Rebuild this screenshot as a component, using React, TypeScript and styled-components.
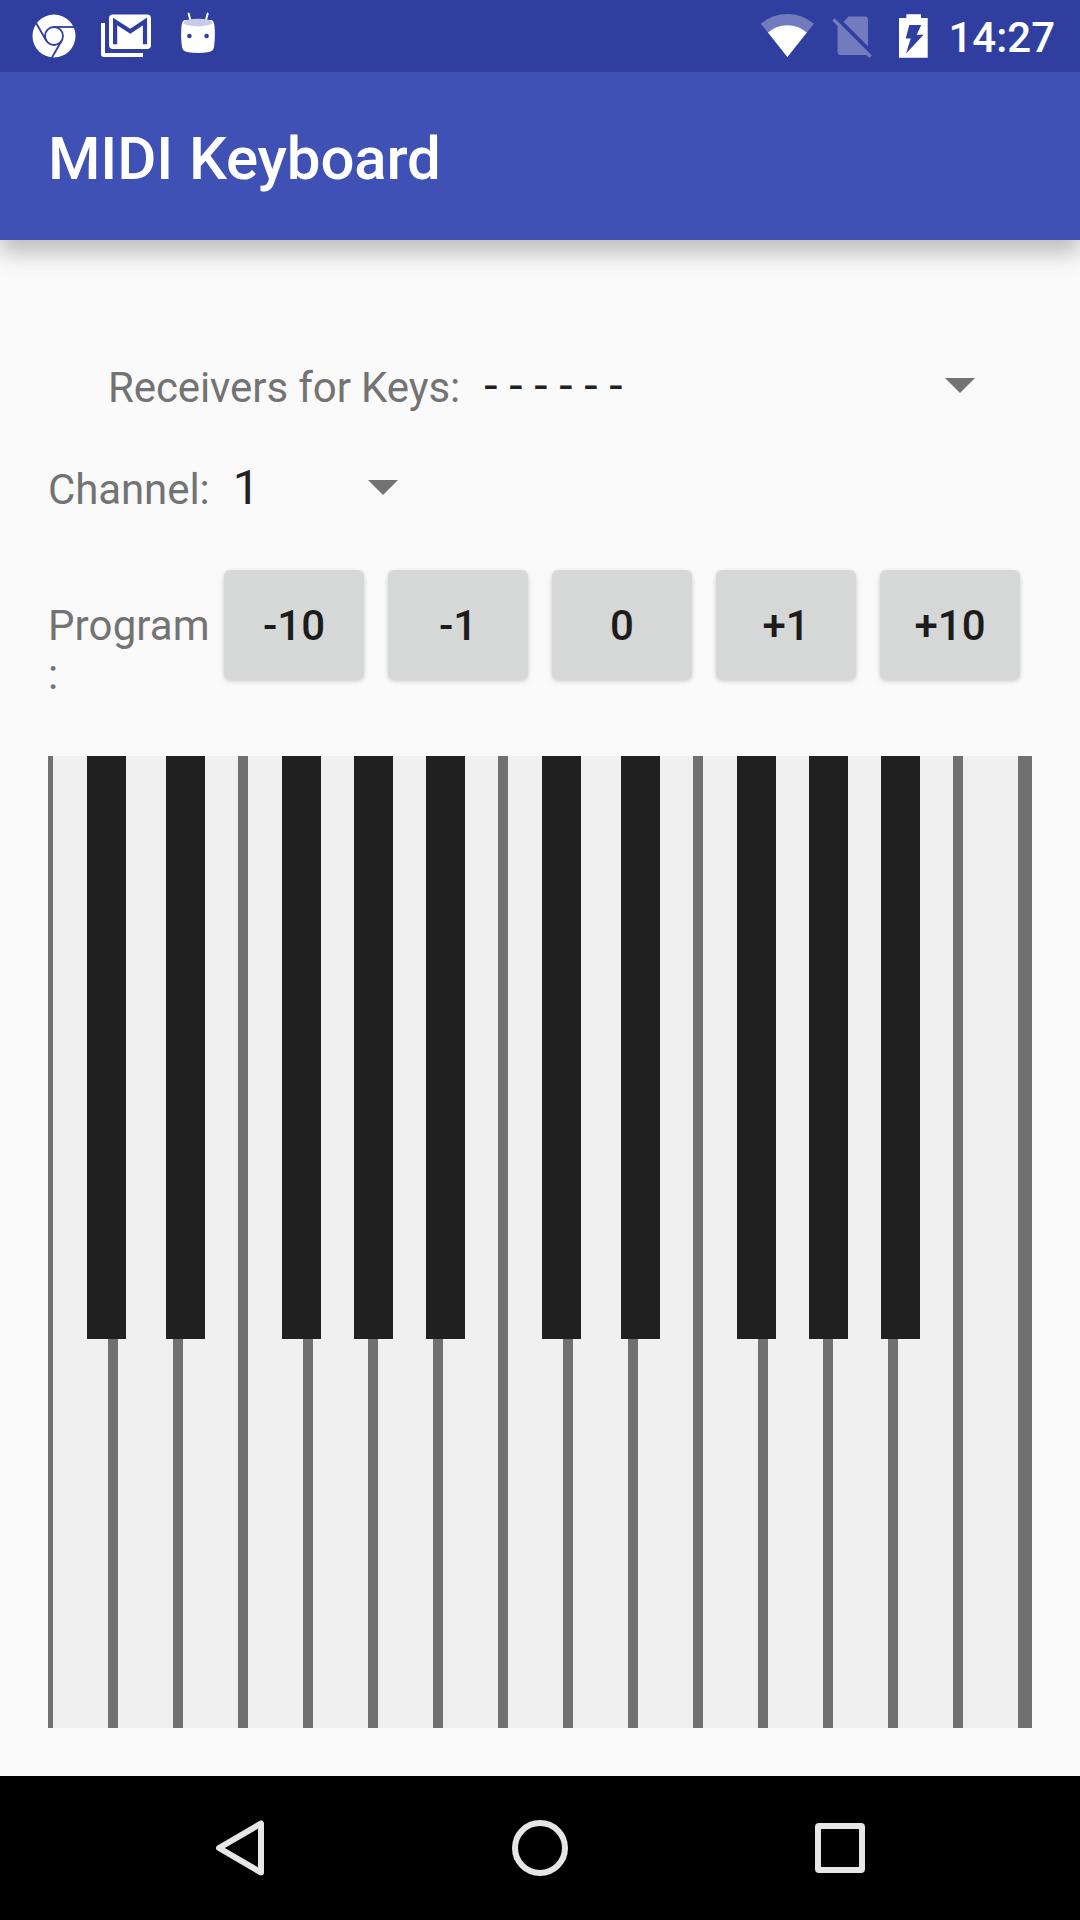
import React from "react";
import styled, { createGlobalStyle } from "styled-components";

const GlobalStyle = createGlobalStyle`
  * { box-sizing: border-box; }
  body { margin: 0; background: #fafafa; font-family: Roboto, "Noto Sans", sans-serif; }
`;

const Screen = styled.div`
  display: flex;
  flex-direction: column;
  width: 1080px;
  height: 1920px;
  background: #fafafa;
  overflow: hidden;
`;

const StatusBar = styled.header`
  position: relative;
  z-index: 1;
  display: flex;
  justify-content: space-between;
  height: 72px;
  padding: 0 25px 0 32px;
  background: #303f9f;
`;

const StatusGroup = styled.div`
  display: flex;
  align-items: center;
`;

const StatusIcon = styled.svg<{ $gap: number }>`
  display: block;
  height: 72px;
  margin-right: ${(p) => p.$gap}px;
`;

const Clock = styled.span`
  padding-top: 4px;
  color: #fff;
  font-size: 42px;
  font-weight: 500;
  line-height: 50px;
`;

const AppBar = styled.div`
  display: flex;
  align-items: center;
  height: 168px;
  padding: 5px 48px 0;
  background: #3f51b5;
  box-shadow: 0 12px 22px rgba(0, 0, 0, 0.26);
  flex: none;
`;

const Title = styled.h1`
  margin: 0;
  color: #fff;
  font-size: 60px;
  font-weight: 500;
  line-height: 70px;
  letter-spacing: -0.13px;
  word-spacing: 1px;
`;

const Content = styled.main`
  display: flex;
  flex-direction: column;
  flex: 1;
  padding: 118px 48px 48px;
`;

const FieldRow = styled.div<{ $indent?: number }>`
  display: flex;
  align-items: baseline;
  height: 56px;
  margin-bottom: 46px;
  padding-left: ${(p) => p.$indent ?? 0}px;
`;

const Label = styled.label`
  color: #737373;
  font-size: 42px;
  line-height: 49px;
  letter-spacing: -0.1px;
  white-space: nowrap;
`;

const Spinner = styled.div<{ $width: number; $gap: number }>`
  display: flex;
  align-items: baseline;
  justify-content: space-between;
  width: ${(p) => p.$width}px;
  margin-left: ${(p) => p.$gap}px;
  color: #212121;
  font-size: 48px;
  line-height: 56px;
  letter-spacing: -0.1px;
`;

const Caret = styled.svg`
  width: 30px;
  height: 15px;
  align-self: flex-start;
  margin-top: 20px;
  fill: #737373;
`;

const ProgramRow = styled.div`
  display: flex;
  align-items: flex-start;
  height: 109px;
  margin: 8px 0 77px;
`;

const ProgramLabel = styled(Label)`
  width: 164px;
  margin: 31px 11.75px 0 0;
  letter-spacing: 0.12px;
  white-space: normal;
  overflow-wrap: anywhere;
`;

const Buttons = styled.div`
  display: grid;
  grid-template-columns: repeat(5, 140.5px);
  gap: 23.5px;
`;

const StepButton = styled.button`
  height: 108.5px;
  padding: 3px 0 0;
  border: 0;
  border-radius: 6px;
  background: #d6d7d7;
  box-shadow: 0 2px 5px rgba(0, 0, 0, 0.2);
  color: #1c1c1c;
  font: 500 42px / 50px Roboto, sans-serif;
`;

const Keyboard = styled.div`
  position: relative;
  height: 972px;
  padding-left: 5px;
  background: #707070;
`;

const WhiteKeys = styled.div`
  display: flex;
  gap: 10px;
  height: 100%;
`;

const WhiteKey = styled.div`
  width: 55px;
  background: #f0f0f0;
`;

const BlackKeys = styled.div`
  position: absolute;
  top: 0;
  left: 0;
  display: flex;
  height: 583px;
`;

const BlackKey = styled.div<{ $space: number }>`
  width: 39px;
  margin-left: ${(p) => p.$space}px;
  background: #202020;
`;

const NavBar = styled.nav`
  display: flex;
  align-items: center;
  justify-content: center;
  gap: 240px;
  height: 144px;
  background: #000;
`;

const NavIcon = styled.svg`
  width: 60px;
  height: 60px;
  fill: none;
  stroke: #e6e6e6;
  stroke-width: 6;
  stroke-linejoin: round;
`;

const steps = ["-10", "-1", "0", "+1", "+10"];
const whiteKeys = Array.from({ length: 15 }, (_, i) => i);
// Space to the left of each black key, over two octaves.
const blackSpaces = [39, 40, 77, 33, 33, 77, 40, 77, 33, 33];

const DropCaret = () => (
  <Caret viewBox="0 0 30 15">
    <path d="M0 0H30L15 15Z" />
  </Caret>
);

export default function App() {
  return (
    <>
      <GlobalStyle />
      <Screen>
        <StatusBar>
          <StatusGroup>
            <StatusIcon $gap={25} width="44" viewBox="32 0 44 72">
              <circle cx="54" cy="36" r="21.5" fill="#fff" />
              <g fill="none" stroke="#303f9f" strokeWidth="1.8">
                <circle cx="54" cy="36" r="9" />
                {[0, 120, 240].map((a) => (
                  <path key={a} d="M54 27H76" transform={`rotate(${a} 54 36)`} />
                ))}
              </g>
            </StatusIcon>
            <StatusIcon $gap={30} width="50" viewBox="101 0 50 72">
              <rect x="109" y="14.5" width="42" height="34.5" rx="4" fill="#fff" />
              <path d="M115.1 44.3V21.5L130.3 31.2L145 21.5V44.3" fill="none" stroke="#303f9f" strokeWidth="4.2" />
              <path d="M101 23H105V53H143V57H104Q101 57 101 54Z" fill="#fff" />
            </StatusIcon>
            <StatusIcon $gap={0} width="34" viewBox="181 0 34 72">
              <path d="M188.6 13.6L190.6 21M207.7 13.6L205.7 21" stroke="#fff" strokeWidth="2" strokeLinecap="round" />
              <path d="M184.5 20H211.5Q214 21 214.5 26Q215.5 37 214 47Q213.5 51 209 52Q198 53.8 187 52Q182.5 51 182 47Q180.5 37 181.5 26Q182 21 184.5 20Z" fill="#fff" />
              <ellipse cx="198" cy="22.6" rx="14.3" ry="3.9" fill="#c8cbe5" />
              <circle cx="189.4" cy="36" r="2.3" fill="#303f9f" />
              <circle cx="206.6" cy="36" r="2.3" fill="#303f9f" />
            </StatusIcon>
          </StatusGroup>
          <StatusGroup>
            <StatusIcon $gap={18} width="54" viewBox="760 0 54 72">
              <path d="M787.4 57L760.7 23.7Q772.5 14 787.4 14T814 23.7Z" fill="#717bbd" />
              <path d="M787.4 57L768 32.5Q776.5 25.3 787.4 25.3T806.8 32.5Z" fill="#fff" />
            </StatusIcon>
            <StatusIcon $gap={27} width="40" viewBox="832 0 40 72">
              <path d="M843.4 21.8L848.5 16.6H865Q868 16.6 868 19.6V46.3Z" fill="#717bbd" />
              <path d="M834.7 18.3L871.8 55.4L869.3 57.9L866.2 54.8Q865.7 55 865 55H840.5Q837.5 55 837.5 52V26L832.2 20.7Z" fill="#717bbd" />
            </StatusIcon>
            <StatusIcon $gap={20} width="29" viewBox="899 0 29 72">
              <path fillRule="evenodd" d="M899 18H906.3V14.2H921V18H927.7V57.8H899ZM909.3 25L905.7 38.5H910.7L906 53.4L923.6 34.7H916.7L921.3 25Z" fill="#fff" />
            </StatusIcon>
            <Clock>14:27</Clock>
          </StatusGroup>
        </StatusBar>
        <AppBar>
          <Title>MIDI Keyboard</Title>
        </AppBar>
        <Content>
          <FieldRow $indent={60}>
            <Label>Receivers for Keys:</Label>
            <Spinner $width={490.7} $gap={24.2}>
              <span>- - - - - -</span>
              <DropCaret />
            </Spinner>
          </FieldRow>
          <FieldRow>
            <Label>Channel:</Label>
            <Spinner $width={165.5} $gap={23.2}>
              <span>1</span>
              <DropCaret />
            </Spinner>
          </FieldRow>
          <ProgramRow>
            <ProgramLabel>Program:</ProgramLabel>
            <Buttons>
              {steps.map((s) => (
                <StepButton key={s}>{s}</StepButton>
              ))}
            </Buttons>
          </ProgramRow>
          <Keyboard>
            <WhiteKeys>
              {whiteKeys.map((k) => (
                <WhiteKey key={k} />
              ))}
            </WhiteKeys>
            <BlackKeys>
              {blackSpaces.map((space, i) => (
                <BlackKey key={i} $space={space} />
              ))}
            </BlackKeys>
          </Keyboard>
        </Content>
        <NavBar>
          <NavIcon viewBox="210 1818 60 60">
            <path d="M261 1823.5V1872.5L219 1848Z" />
          </NavIcon>
          <NavIcon viewBox="510 1818 60 60">
            <circle cx="540" cy="1848" r="25" />
          </NavIcon>
          <NavIcon viewBox="810 1818 60 60">
            <rect x="818" y="1826" width="44" height="44" rx="1" />
          </NavIcon>
        </NavBar>
      </Screen>
    </>
  );
}
